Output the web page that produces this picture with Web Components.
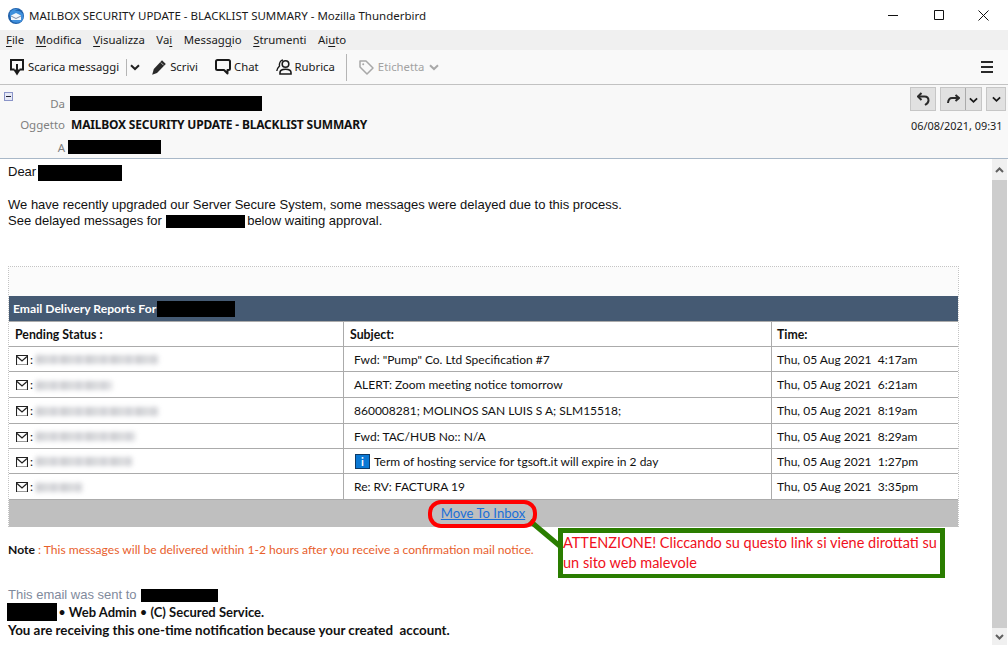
<!DOCTYPE html>
<html lang="it">
<head>
<meta charset="utf-8">
<title>MAILBOX SECURITY UPDATE - BLACKLIST SUMMARY - Mozilla Thunderbird</title>
<style>
    html, body { margin: 0; padding: 0; height: 100%; overflow: hidden; background: #fff; }
    body { font-family: "Noto Sans", sans-serif; }
</style>
</head>
<body>
<tb-window>
    <tb-titlebar>MAILBOX SECURITY UPDATE - BLACKLIST SUMMARY - Mozilla Thunderbird</tb-titlebar>
    <tb-menubar></tb-menubar>
    <tb-toolbar></tb-toolbar>
    <tb-header></tb-header>
    <mail-pane></mail-pane>
</tb-window>

<script>
const chevron = (color, w = 10) => `<svg width="${w}" height="7" viewBox="0 0 10 7"><path d="M1 1.2 5 5 9 1.2" fill="none" stroke="${color}" stroke-width="2"/></svg>`;

class TbWindow extends HTMLElement {
    connectedCallback() {
        this.attachShadow({ mode: 'open' });
        this.shadowRoot.innerHTML = `
            <style>
                :host { display: flex; flex-direction: column; width: 1008px; height: 645px; overflow: hidden; }
            </style>
            <slot></slot>
        `;
    }
}

class TbTitlebar extends HTMLElement {
    connectedCallback() {
        this.attachShadow({ mode: 'open' });
        this.shadowRoot.innerHTML = `
            <style>
                :host { display: flex; align-items: center; height: 30px; flex: none; background: #fff; color: #1a1a1a; font-size: 11.500px; padding-left: 8px; }
                .logo { margin-right: 5px; flex: none; margin-top: 1px; }
                .title { flex: 1; white-space: nowrap; }
                .ctl { width: 46px; display: flex; justify-content: center; }
                .ctl:last-child { width: 43px; margin-right: 3px; }
            </style>
            <svg class="logo" width="16" height="16" viewBox="0 0 16 16">
                <circle cx="8" cy="8" r="8" fill="#1f5fa8"/>
                <path d="M2 4C4 1 8 0 11 1c-2 0-3 1-4 2 3-1 6 0 8 3 1 3 0 6-2 8-3 1-6 1-8 0C3 12 1 8 2 4Z" fill="#3f8fdc"/>
                <path d="M3 7.500 8 5l5 2.500v4.500H3Z" fill="#f2f5fa"/>
                <path d="M3 8l5 2.500L13 8" fill="none" stroke="#7b8aa6" stroke-width="1"/>
            </svg>
            <span class="title"><slot></slot></span>
            <span class="ctl"><svg width="10" height="10" viewBox="0 0 10 10"><path d="M0 5.500h10" stroke="#111" stroke-width="1"/></svg></span>
            <span class="ctl"><svg width="10" height="10" viewBox="0 0 10 10"><path d="M.5.5h9v9h-9Z" fill="none" stroke="#111" stroke-width="1"/></svg></span>
            <span class="ctl"><svg width="11" height="11" viewBox="0 0 11 11"><path d="M.5.5l10 10M10.500.5l-10 10" stroke="#111" stroke-width="1"/></svg></span>
        `;
    }
}

class TbMenubar extends HTMLElement {
    connectedCallback() {
        this.attachShadow({ mode: 'open' });
        this.shadowRoot.innerHTML = `
            <style>
                :host { display: flex; align-items: center; box-sizing: border-box; height: 20px; padding-bottom: 1px; flex: none; background: #f0f0f0; color: #1a1a1a; font-size: 11.400px; padding-left: 6px; gap: 11.500px; }
                u { text-underline-offset: 2px; }
            </style>
            <span><u>F</u>ile</span>
            <span><u>M</u>odifica</span>
            <span><u>V</u>isualizza</span>
            <span>Va<u>i</u></span>
            <span>Messag<u>g</u>io</span>
            <span><u>S</u>trumenti</span>
            <span>Ai<u>u</u>to</span>
        `;
    }
}

class TbToolbar extends HTMLElement {
    connectedCallback() {
        this.attachShadow({ mode: 'open' });
        this.shadowRoot.innerHTML = `
            <style>
                :host { display: flex; align-items: center; height: 35px; flex: none; box-sizing: border-box; background: #f9f9f9; border-bottom: 1px solid #c2c2c2; color: #1a1a1a; font-size: 11.300px; padding-left: 10px; }
                svg { flex: none; display: block; }
                .lbl { margin-left: 4px; margin-top: -2px; white-space: nowrap; }
                .sep { width: 1px; background: #b5b5b5; flex: none; }
                .off { color: #a2a2a2; }
                .end { margin-left: auto; margin-right: 15px; }
            </style>
            <svg width="14" height="17" viewBox="0 0 14 17"><path d="M4.500 10.500H1V1h12v9.500H9.500" fill="none" stroke="#1a1a1a" stroke-width="2"/><path d="M7 5v8" stroke="#1a1a1a" stroke-width="2"/><path d="M3.200 10.500h7.600L7 16.500Z" fill="#1a1a1a"/></svg>
            <span class="lbl">Scarica messaggi</span>
            <span class="sep" style="height:17px;margin-left:7px"></span>
            <span style="margin-left:3px">${chevron('#222')}</span>
            <svg style="margin-left:12px" width="14" height="15" viewBox="0 0 14 15"><path d="M10 .3 13.800 4 5 13 .2 14.800 1.800 9Z" fill="#2a2a2a"/><path d="M8.800 2.500l2.800 2.800" stroke="#f9f9f9" stroke-width=".7"/></svg>
            <span class="lbl">Scrivi</span>
            <svg style="margin-left:17px" width="16" height="16" viewBox="0 0 16 16"><path d="M2.500 1h11A1.500 1.500 0 0 1 15 2.500v7a1.500 1.500 0 0 1-1.500 1.500h-1v3.500L9 11H2.500A1.500 1.500 0 0 1 1 9.500v-7A1.500 1.500 0 0 1 2.500 1Z" fill="none" stroke="#1a1a1a" stroke-width="2" stroke-linejoin="round"/></svg>
            <span class="lbl" style="margin-left:3px">Chat</span>
            <svg style="margin-left:17px" width="16" height="16" viewBox="0 0 16 16"><circle cx="9.500" cy="5" r="3.300" fill="none" stroke="#1a1a1a" stroke-width="1.600"/><path d="M4 15v-1.500c0-2 2-3.300 5.500-3.300s5.500 1.300 5.500 3.300V15Z" fill="none" stroke="#1a1a1a" stroke-width="1.600"/><path d="M7 1C4.500 1.500 3 4 3.500 7 2 8.500 1 10 .8 12" fill="none" stroke="#1a1a1a" stroke-width="1.400"/></svg>
            <span class="lbl" style="margin-left:3px">Rubrica</span>
            <span class="sep" style="height:27px;margin-left:11px"></span>
            <svg style="margin-left:12px" width="15" height="15" viewBox="0 0 15 15"><path d="M1 1h6l7 7-6 6-7-7Z" fill="none" stroke="#a8a8a8" stroke-width="1.500" stroke-linejoin="round"/><circle cx="4.200" cy="4.200" r="1" fill="#a8a8a8"/></svg>
            <span class="lbl off">Etichetta</span>
            <span style="margin-left:5px">${chevron('#a8a8a8')}</span>
            <svg class="end" width="12" height="12" viewBox="0 0 12 12"><path d="M0 1h12M0 6h12M0 11h12" stroke="#2a2a2a" stroke-width="2"/></svg>
        `;
    }
}

class RedactBox extends HTMLElement {
    connectedCallback() {
        this.attachShadow({ mode: 'open' });
        this.shadowRoot.innerHTML = `
            <style>
                :host { display: inline-block; background: #000; width: var(--w, 80px); height: var(--h, 15px); vertical-align: middle; }
            </style>
        `;
    }
}

class TbHeader extends HTMLElement {
    connectedCallback() {
        this.attachShadow({ mode: 'open' });
        this.shadowRoot.innerHTML = `
            <style>
                :host { display: flex; height: 74px; flex: none; box-sizing: border-box; background: #f8f8f8; border-bottom: 1px solid #a9b8c8; font-size: 11.500px; color: #1a1a1a; position: relative; }
                .twisty { position: absolute; top: 7px; left: 4px; width: 7px; height: 7px; border: 1px solid #8a94c8; background: #e6e9f6; }
                .twisty::after { content: ''; position: absolute; left: 1px; right: 1px; top: 3px; height: 1px; background: #223; }
                .rows { flex: 1; display: flex; flex-direction: column; padding-top: 8px; }
                .row { display: flex; align-items: center; height: 22px; }
                .row:last-child { height: 23px; margin-top: 1px; }
                .k { width: 65px; text-align: right; color: #808080; flex: none; }
                .subject { margin-left: 6px; font-size: 12px; font-weight: 700; color: #111; letter-spacing: -0.19px; white-space: nowrap; }
                .side { width: 98px; flex: none; padding-top: 2px; display: flex; flex-direction: column; }
                .btns { display: flex; gap: 4px; }
                .btn { box-sizing: border-box; height: 24px; background: #e1e1e1; border: 1px solid #c6c6c6; display: flex; align-items: center; justify-content: center; }
                .date { margin-top: 7px; margin-left: 1px; white-space: nowrap; color: #1a1a1a; font-size: 10.900px; }
            </style>
            <span class="twisty"></span>
            <div class="rows">
                <div class="row"><span class="k">Da</span><redact-box style="--w:192px;--h:15px;margin-left:5px"></redact-box></div>
                <div class="row"><span class="k">Oggetto</span><span class="subject">MAILBOX SECURITY UPDATE - BLACKLIST SUMMARY</span></div>
                <div class="row"><span class="k">A</span><redact-box style="--w:93px;--h:14px;margin-left:3px"></redact-box></div>
            </div>
            <div class="side">
                <div class="btns">
                    <span class="btn" style="width:26px"><svg width="13" height="14" viewBox="0 0 13 14"><path d="M4.500 1 1 4.500 4.500 8" fill="none" stroke="#2a2a2a" stroke-width="2"/><path d="M1.500 4.500H7.500Q11.500 4.500 11.500 8.500 11.500 11 8 13" fill="none" stroke="#2a2a2a" stroke-width="2"/></svg></span>
                    <span class="btn" style="width:42px;justify-content:flex-start;padding-left:6px"><svg width="13" height="10" viewBox="0 0 13 10"><path d="M8.500 1 12 4 8.500 7" fill="none" stroke="#2a2a2a" stroke-width="2"/><path d="M11.500 4H5Q1.500 4 1 9" fill="none" stroke="#2a2a2a" stroke-width="2"/></svg><span style="width:1px;height:22px;background:#aaa;margin-left:5px"></span><span style="margin-left:3px">${chevron('#1a1a1a', 9)}</span></span>
                    <span class="btn" style="width:20px">${chevron('#1a1a1a', 9)}</span>
                </div>
                <span class="date">06/08/2021, 09:31</span>
            </div>
        `;
    }
}

class DeliveryRow extends HTMLElement {
    connectedCallback() {
        this.attachShadow({ mode: 'open' });
        this.shadowRoot.innerHTML = `
            <style>
                :host { display: grid; grid-template-columns: 335px 428px 1fr; box-sizing: border-box; height: var(--h, 25px); border-bottom: 1px solid #ababab; align-items: stretch; }
                :host([head]) { font-weight: 700; font-size: 12.300px; }
                .c { display: flex; align-items: center; white-space: nowrap; min-width: 0; padding-top: 1px; }
                .a { padding-left: 6px; border-right: 1px solid #ababab; }
                .b { padding-left: 10px; border-right: 1px solid #ababab; }
                .t { padding-left: 5px; }
            </style>
            <div class="c a"><slot name="status"></slot></div>
            <div class="c b"><slot name="subject"></slot></div>
            <div class="c t"><slot name="time"></slot></div>
        `;
    }
}

class PendingStatus extends HTMLElement {
    connectedCallback() {
        const w = this.getAttribute('blur') || '100';
        this.attachShadow({ mode: 'open' });
        this.shadowRoot.innerHTML = `
            <style>
                :host { display: inline-flex; align-items: center; padding-left: 1px; }
                .smudge { display: block; height: 9px; margin-left: 3px; width: ${w}px; filter: blur(2.400px); opacity: .5;
                    background: repeating-linear-gradient(90deg, #8d8f98 0 5px, #c8c8cc 5px 7px, #9da1a8 7px 11px, #dcdcdc 11px 13px, #a4a6ae 13px 22px, #d4d4d8 22px 25px); }
            </style>
            <svg width="12" height="10" viewBox="0 0 12 10"><path d="M.5.5h11v9H.5Z" fill="#fff" stroke="#222" stroke-width="1.100"/><path d="M1 1.500 6 6l5-4.500" fill="none" stroke="#222" stroke-width="1.300"/><path d="M1 9.500h10" stroke="#999" stroke-width="1"/></svg>
            <span style="margin-left:2px">:</span><span class="smudge"></span>
        `;
    }
}

class DeliveryTable extends HTMLElement {
    connectedCallback() {
        const rows = [
            [25, 122, 'Fwd: "Pump" Co. Ltd Specification #7', 'Thu, 05 Aug 2021&nbsp; 4:17am'],
            [26, 76, 'ALERT: Zoom meeting notice tomorrow', 'Thu, 05 Aug 2021&nbsp; 6:21am'],
            [26, 122, '860008281; MOLINOS SAN LUIS S A; SLM15518;', 'Thu, 05 Aug 2021&nbsp; 8:19am'],
            [25, 100, 'Fwd: TAC/HUB No:: N/A', 'Thu, 05 Aug 2021&nbsp; 8:29am'],
            [25, 96, '<span class="info">i</span>Term of hosting service for tgsoft.it will expire in 2 day', 'Thu, 05 Aug 2021&nbsp; 1:27pm'],
            [26, 46, 'Re: RV: FACTURA 19', 'Thu, 05 Aug 2021&nbsp; 3:35pm']
        ];
        this.attachShadow({ mode: 'open' });
        this.shadowRoot.innerHTML = `
            <style>
                :host { display: block; box-sizing: border-box; width: 951px; border: 1px dotted #c4c4c4; border-bottom: 0; font-family: Lato, sans-serif; font-size: 12px; color: #111; }
                .top { height: 29px; background: #fbfbfb; }
                .bar { height: 25px; background: #455a73; color: #fff; font-weight: 700; font-size: 12.150px; display: flex; align-items: center; padding-left: 4px; }
                .bar redact-box { margin-left: 1px; }
                .info { display: inline-flex; align-items: center; justify-content: center; box-sizing: border-box; width: 15px; height: 15px; background: #0a78d4; border: 1px solid #0d3a66; color: #fff; font-size: 11px; font-weight: 700; margin: 0 4px 0 1px; }
                .foot { height: 27px; background: #bfbfbf; display: flex; justify-content: center; align-items: center; }
                a { color: #1a6fd8; font-size: 13.100px; margin-left: -1px; margin-bottom: 2px; }
            </style>
            <div class="top"></div>
            <div class="bar">Email Delivery Reports For<redact-box style="--w:78px;--h:16px"></redact-box></div>
            <delivery-row head style="--h:26px;border-top:1px solid #ababab">
                <span slot="status">Pending Status :</span><span slot="subject" style="margin-left:-4px">Subject:</span><span slot="time">Time:</span>
            </delivery-row>
            ${rows.map(r => `
            <delivery-row style="--h:${r[0]}px">
                <pending-status slot="status" blur="${r[1]}"></pending-status>
                <span slot="subject" style="display:flex;align-items:center">${r[2]}</span>
                <span slot="time">${r[3]}</span>
            </delivery-row>`).join('')}
            <div class="foot"><a href="#">Move To Inbox</a></div>
        `;
    }
}

class WarningOverlay extends HTMLElement {
    connectedCallback() {
        this.attachShadow({ mode: 'open' });
        // callout drawn on top of the mail, so placed by coordinates
        this.shadowRoot.innerHTML = `
            <style>
                :host { display: block; position: absolute; inset: 0; pointer-events: none; }
                .ring { position: absolute; left: 428px; top: 341px; width: 109px; height: 28px; box-sizing: border-box; border: 4px solid #f00; border-radius: 13px; }
                svg { position: absolute; left: 525px; top: 355px; }
                .note { position: absolute; left: 558px; top: 369px; width: 387px; height: 50px; box-sizing: border-box; background: #fff; border: solid #2a7d00; border-width: 5px 5px 4px 5px; color: #f01020; font-family: Lato, sans-serif; font-size: 14.500px; line-height: 20px; }
            </style>
            <svg width="40" height="36" viewBox="0 0 40 36"><path d="M5 7 36 33" stroke="#2a7d00" stroke-width="5"/></svg>
            <span class="ring"></span>
            <div class="note">ATTENZIONE! Cliccando su questo link si viene dirottati su un sito web malevole</div>
        `;
    }
}

class TbScrollbar extends HTMLElement {
    connectedCallback() {
        this.attachShadow({ mode: 'open' });
        this.shadowRoot.innerHTML = `
            <style>
                :host { display: flex; flex-direction: column; flex: none; width: 15px; margin-right: 1px; background: #f0f0f0; }
                .arrow { height: 21px; display: flex; align-items: center; justify-content: center; flex: none; }
                .thumb { flex: 1; background: #cdcdcd; }
            </style>
            <span class="arrow"><svg width="9" height="6" viewBox="0 0 9 6"><path d="M1 5 4.500 1.500 8 5" fill="none" stroke="#606060" stroke-width="2"/></svg></span>
            <span class="thumb"></span>
            <span class="arrow" style="height:17px"><svg width="9" height="6" viewBox="0 0 9 6"><path d="M1 1 4.500 4.500 8 1" fill="none" stroke="#606060" stroke-width="2"/></svg></span>
        `;
    }
}

class MailPane extends HTMLElement {
    connectedCallback() {
        this.attachShadow({ mode: 'open' });
        this.shadowRoot.innerHTML = `
            <style>
                :host { display: flex; flex: 1; min-height: 0; background: #fff; position: relative; }
                .body { flex: 1; padding: 6px 0 0 8px; color: #111; font-family: "Liberation Sans", sans-serif; font-size: 13px; line-height: 16px; min-width: 0; }
                .dear { display: flex; align-items: center; height: 16px; }
                .dear span { margin-top: -2px; }
                .dear redact-box { margin-left: 2px; }
                .intro { margin-top: 16px; height: 69px; }
                .intro redact-box { margin-right: -1px; }
                .note-line { margin-top: 15px; font-family: Lato, sans-serif; font-size: 12.100px; color: #e8602c; line-height: 16px; }
                .note-line b { color: #111; }
                .sent { margin-top: 29px; color: #7f8a9c; display: flex; align-items: center; height: 16px; }
                .sent redact-box { margin-left: 4px; }
                .foot { font-family: Lato, sans-serif; font-weight: 700; font-size: 13.360px; line-height: 18px; color: #111; }
                .foot redact-box { margin-left: -1px; margin-right: -2px; vertical-align: top; }
                .foot .l1 { font-size: 13px; }
                .foot i { font-style: normal; font-weight: 400; }
            </style>
            <div class="body">
                <div class="dear"><span>Dear</span><redact-box style="--w:84px;--h:16px"></redact-box></div>
                <div class="intro">We have recently upgraded our Server Secure System, some messages were delayed due to this process.<br>See delayed messages for <redact-box style="--w:79px;--h:13px"></redact-box> below waiting approval.</div>
                <delivery-table></delivery-table>
                <div class="note-line"><b>Note</b> : This messages will be delivered within 1-2 hours after you receive a confirmation mail notice.</div>
                <div class="sent">This email was sent to<redact-box style="--w:77px;--h:13px"></redact-box></div>
                <div class="foot"><redact-box style="--w:50px;--h:18px"></redact-box> <span class="l1"><i>•</i> Web Admin <i>•</i> (C) Secured Service.</span><br>You are receiving this one-time notification because your created&nbsp; account.</div>
            </div>
            <tb-scrollbar></tb-scrollbar>
            <warning-overlay></warning-overlay>
        `;
    }
}

customElements.define('redact-box', RedactBox);
customElements.define('tb-window', TbWindow);
customElements.define('tb-titlebar', TbTitlebar);
customElements.define('tb-menubar', TbMenubar);
customElements.define('tb-toolbar', TbToolbar);
customElements.define('tb-header', TbHeader);
customElements.define('delivery-row', DeliveryRow);
customElements.define('pending-status', PendingStatus);
customElements.define('delivery-table', DeliveryTable);
customElements.define('warning-overlay', WarningOverlay);
customElements.define('tb-scrollbar', TbScrollbar);
customElements.define('mail-pane', MailPane);
</script>
</body>
</html>
